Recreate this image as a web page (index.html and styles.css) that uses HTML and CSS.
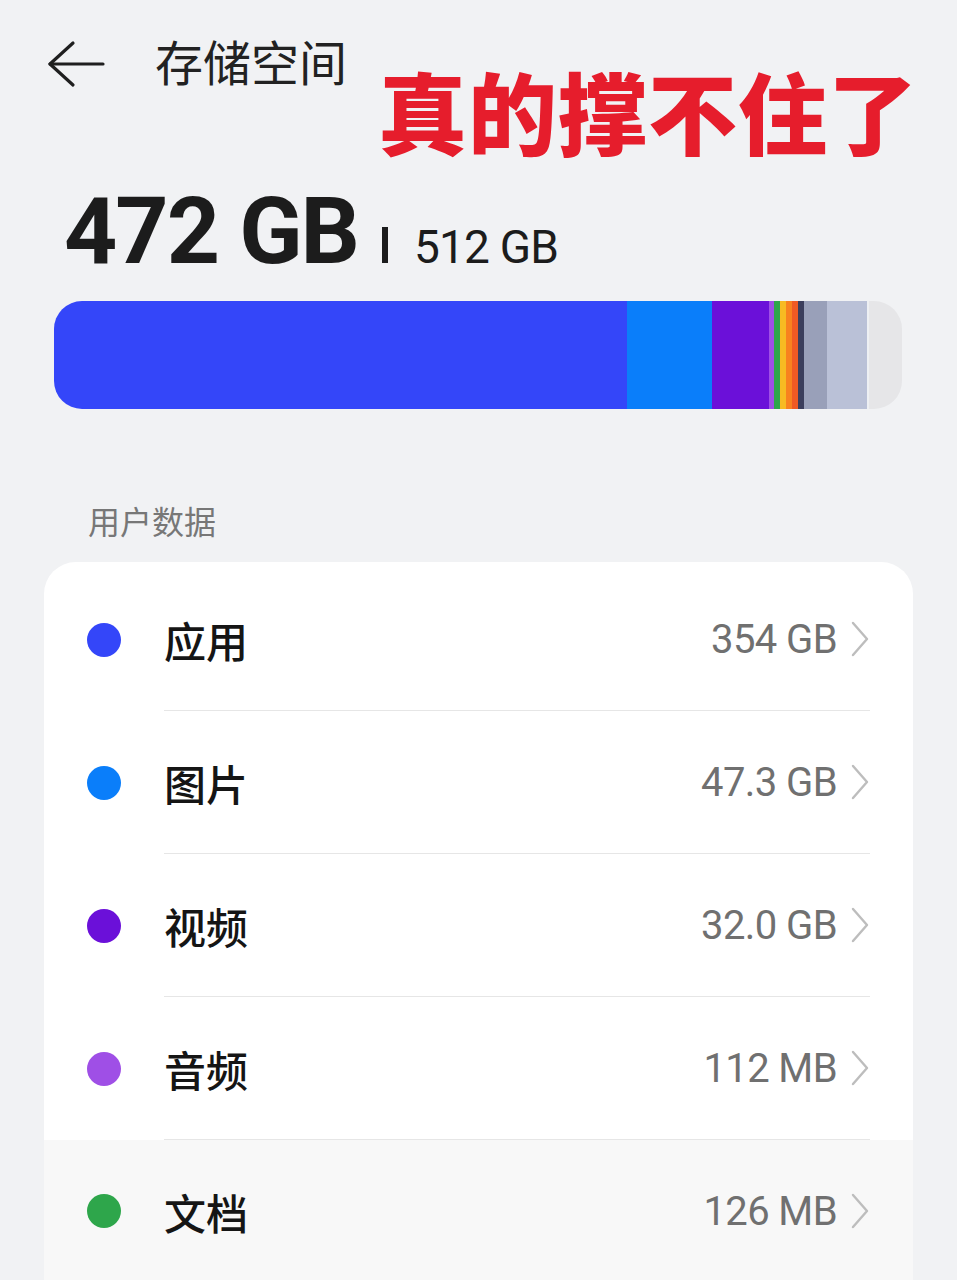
FILE: index.html
```html
<!doctype html>
<html>
<head>
	<meta charset="utf-8">
	<title>存储空间</title>
	<link rel="stylesheet" href="styles.css">
</head>
<body>
	<div class="topbar">
		<svg class="back" width="58" height="48" viewBox="0 0 58 48">
			<polyline points="26,3 3,24 26,45" fill="none" stroke="#1f1f1f" stroke-width="3.2" stroke-linecap="round" stroke-linejoin="round"/>
			<line x1="3" y1="24" x2="56" y2="24" stroke="#1f1f1f" stroke-width="3.2" stroke-linecap="round"/>
		</svg>
		<div class="title">存储空间</div>
	</div>
	<div class="sticker">真的撑不住了</div>

	<div class="total">
		<span class="used">472 GB</span>
		<span class="sep"></span>
		<span class="cap">512 GB</span>
	</div>

	<div class="bar">
		<span class="seg apps" style="width:573px"></span>
		<span class="seg pics" style="width:85px"></span>
		<span class="seg video" style="width:57px"></span>
		<span class="seg audio" style="width:5px"></span>
		<span class="seg docs" style="width:6px"></span>
		<span class="seg yellow" style="width:6px"></span>
		<span class="seg orange" style="width:6px"></span>
		<span class="seg red" style="width:6px"></span>
		<span class="seg dark" style="width:6px"></span>
		<span class="seg grey" style="width:23px"></span>
		<span class="seg system" style="width:40px"></span>
		<span class="seg gap" style="width:2px"></span>
		<span class="seg free"></span>
	</div>

	<div class="section">用户数据</div>

	<div class="card">
		<div class="row">
			<span class="dot apps"></span>
			<div class="body">
				<span class="name">应用</span>
				<span class="size">354 GB</span>
				<svg class="chev" width="20" height="36" viewBox="0 0 20 36"><polyline points="3,2 17,18 3,34" fill="none" stroke="#bdbdbd" stroke-width="2.4" stroke-linecap="round" stroke-linejoin="round"/></svg>
			</div>
		</div>
		<div class="row">
			<span class="dot pics"></span>
			<div class="body">
				<span class="name">图片</span>
				<span class="size">47.3 GB</span>
				<svg class="chev" width="20" height="36" viewBox="0 0 20 36"><polyline points="3,2 17,18 3,34" fill="none" stroke="#bdbdbd" stroke-width="2.4" stroke-linecap="round" stroke-linejoin="round"/></svg>
			</div>
		</div>
		<div class="row">
			<span class="dot video"></span>
			<div class="body">
				<span class="name">视频</span>
				<span class="size">32.0 GB</span>
				<svg class="chev" width="20" height="36" viewBox="0 0 20 36"><polyline points="3,2 17,18 3,34" fill="none" stroke="#bdbdbd" stroke-width="2.4" stroke-linecap="round" stroke-linejoin="round"/></svg>
			</div>
		</div>
		<div class="row">
			<span class="dot audio"></span>
			<div class="body">
				<span class="name">音频</span>
				<span class="size">112 MB</span>
				<svg class="chev" width="20" height="36" viewBox="0 0 20 36"><polyline points="3,2 17,18 3,34" fill="none" stroke="#bdbdbd" stroke-width="2.4" stroke-linecap="round" stroke-linejoin="round"/></svg>
			</div>
		</div>
		<div class="row pressed">
			<span class="dot docs"></span>
			<div class="body last">
				<span class="name">文档</span>
				<span class="size">126 MB</span>
				<svg class="chev" width="20" height="36" viewBox="0 0 20 36"><polyline points="3,2 17,18 3,34" fill="none" stroke="#bdbdbd" stroke-width="2.4" stroke-linecap="round" stroke-linejoin="round"/></svg>
			</div>
		</div>
	</div>
</body>
</html>
```

FILE: styles.css
```css
html, body {margin: 0; padding: 0; overflow: hidden;}
body {background: #f1f2f4; font-family: Roboto, "Noto Sans CJK SC", sans-serif; color: #1f1f1f; position: relative;}

.topbar {display: flex; align-items: center; height: 56px; padding: 36px 0 0 47px;}
.back {display: block;}
.title {margin-left: 50px; font-size: 48px; line-height: 56px; margin-top: -8px; font-family: "Noto Sans CJK SC", sans-serif; color: #222;}

.sticker {position: absolute; left: 378px; top: 65px; font-family: "Noto Sans CJK SC", sans-serif; font-weight: 900; font-size: 89px; line-height: 1; color: #e61d2c; letter-spacing: 1px;}

.total {display: flex; align-items: baseline; margin-top: 93px; padding-left: 64px; line-height: 1;}
.used {font-size: 93px; font-weight: 700; letter-spacing: -2px; color: #1c1c1c;}
.sep {display: inline-block; width: 6px; height: 36px; background: #1c1c1c; margin: 0 26px 0 24px;}
.cap {font-size: 46px; font-weight: 400; letter-spacing: -0.8px; color: #1c1c1c;}

.bar {display: flex; height: 108px; margin: 23px 55px 0 54px; border-radius: 28px; overflow: hidden;}
.seg {display: block; height: 100%; flex: none;}
.seg.free {flex: 1; background: #e6e6e8;}
.apps {background: #3446f9;}
.pics {background: #0a7efa;}
.video {background: #6b10d9;}
.audio {background: #9f4fe6;}
.docs {background: #2ea64b;}
.yellow {background: #f7bb22;}
.orange {background: #f8821f;}
.red {background: #f05a24;}
.dark {background: #3b3e5c;}
.grey {background: #99a0b9;}
.system {background: #bac1d7;}
.gap {background: #eef0f3;}

.section {margin-top: 95px; padding-left: 88px; font-family: "Noto Sans CJK SC", sans-serif; font-size: 32px; line-height: 32px; color: #777;}

.card {margin: 26px 44px 0; padding-top: 6px; background: #fff; border-radius: 32px 32px 0 0;}
.row {display: flex; align-items: stretch; padding: 0 43px;}
.row.pressed {background: #f8f8f8; padding-bottom: 12px;}
.dot {flex: none; align-self: center; width: 34px; height: 34px; border-radius: 50%; margin-right: 43px;}
.row.pressed .dot {margin-top: 0;}
.body {flex: 1; display: flex; align-items: center; height: 142px; border-bottom: 1px solid #e6e6e6;}
.body.last {border-bottom: none;}
.name {flex: 1; font-family: "Noto Sans CJK SC", sans-serif; font-size: 42px; font-weight: 500; color: #151515;}
.size {font-size: 40px; color: #707070; letter-spacing: -0.6px; margin-right: 13px;}
.chev {display: block; flex: none;}
```
